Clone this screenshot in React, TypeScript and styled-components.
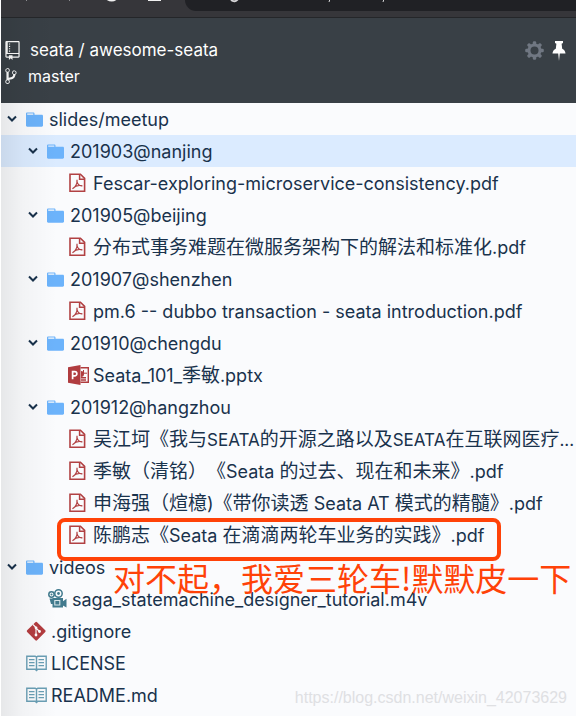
import React from "react";
import styled, { createGlobalStyle, css } from "styled-components";

const GlobalStyle = createGlobalStyle`
  * { box-sizing: border-box; }
  body {
    margin: 0;
    background: #fafbfd;
    font-family: Inter, "Noto Sans CJK SC", sans-serif;
    color: #19324c;
  }
`;

const Page = styled.div`
  position: relative;
  min-height: 100vh;
  overflow: hidden;
  border-left: 1px solid #ffffff;
  background: #fafbfd;
`;

const EdgeShade = styled.div`
  position: absolute;
  inset: 18px auto 0 0;
  width: 56px;
  pointer-events: none;
  background: linear-gradient(to right, rgba(0, 0, 0, 0.08), rgba(0, 0, 0, 0.03) 40%, rgba(0, 0, 0, 0));
`;

const BrowserBar = styled.div`
  display: flex;
  height: 18px;
  overflow: hidden;
  background: #36363a;
  border-bottom: 1px solid #242629;
`;

const ToolIcons = styled.svg`
  flex: none;
  width: 184px;
  height: 17px;
`;

const AddressBar = styled.div`
  flex: 1;
  height: 11px;
  border-bottom-left-radius: 12px;
  background: #202125;
`;

const AddressMarks = styled.svg`
  display: block;
  width: 220px;
  height: 11px;
`;

const Header = styled.header`
  display: flex;
  justify-content: space-between;
  height: 85px;
  padding: 19px 10px 0 4px;
  background: #394046;
  color: #ffffff;
`;

const HeaderLine = styled.div`
  display: flex;
  align-items: center;
  gap: 10px;
  height: 26px;
  font-size: 17px;
  line-height: 26px;
`;

const BranchLine = styled(HeaderLine)`
  font-size: 16px;
`;

const HeaderLink = styled.a`
  color: inherit;
  text-decoration: none;
`;

const Actions = styled.div`
  display: flex;
  align-items: flex-start;
  gap: 8px;
  padding-top: 4px;
`;

const IconButton = styled.button`
  display: flex;
  padding: 0;
  border: 0;
  background: none;
  color: inherit;
`;

const Tree = styled.ul`
  margin: 0;
  padding: 0;
  list-style: none;
`;

const Row = styled.li<{ $level: number; $selected?: boolean }>`
  display: flex;
  align-items: center;
  height: 32px;
  padding-left: ${(p) => 5 + p.$level * 21}px;
  ${(p) => p.$selected && css`background: #dbebff;`}
`;

const Toggle = styled.button`
  display: flex;
  flex: none;
  width: 20px;
  padding: 0;
  border: 0;
  background: none;
  color: #19324c;
`;

const ToggleSpace = styled.span`
  flex: none;
  width: 20px;
`;

const IconSlot = styled.span<{ $wide?: boolean }>`
  display: flex;
  flex: none;
  width: ${(p) => (p.$wide ? 25 : 23)}px;
`;

const Name = styled.a<{ $dense?: boolean }>`
  flex: 1;
  min-width: 0;
  padding-top: 2px;
  overflow: hidden;
  text-overflow: ellipsis;
  white-space: nowrap;
  color: inherit;
  font-size: ${(p) => (p.$dense ? 17 : 18)}px;
  line-height: 32px;
  text-decoration: none;
`;

const Han = styled.span`
  font-family: "Noto Sans CJK SC", sans-serif;
  font-size: 19px;
  line-height: 0;
  text-spacing-trim: space-all;
`;

const HighlightBox = styled.div`
  position: absolute;
  top: 518px;
  left: 56px;
  width: 444px;
  height: 43px;
  border: 4px solid #ff4208;
  border-radius: 8px;
  pointer-events: none;
`;

const Remark = styled.div`
  position: absolute;
  top: 554px;
  left: 112px;
  color: #ff4208;
  font-family: "Noto Sans CJK SC", sans-serif;
  font-size: 32px;
  line-height: 46px;
  white-space: nowrap;
`;

const Watermark = styled.div`
  position: absolute;
  right: 9px;
  bottom: 8px;
  color: #dfe0e3;
  font-family: "Liberation Sans", Arial, sans-serif;
  font-size: 16px;
  line-height: 20px;
`;

type Kind = "folder" | "pdf" | "ppt" | "video" | "git" | "book";

const RepoIcon = () => (
  <svg width="15" height="19" viewBox="0 0 12 16" fill="currentColor" aria-hidden="true">
    <path d="M4 9H3V8h1v1zm0-3H3v1h1V6zm0-2H3v1h1V4zm0-2H3v1h1V2zm8-1v12c0 .55-.45 1-1 1H6v2l-1.5-1.5L3 16v-2H1c-.55 0-1-.45-1-1V1c0-.55.45-1 1-1h10c.55 0 1 .45 1 1zm-1 10H1v2h2v-1h3v1h5v-2zm0-10H2v9h9V1z" />
  </svg>
);

const BranchIcon = () => (
  <svg width="13" height="18" viewBox="0 0 11 16" fill="currentColor" aria-hidden="true">
    <path d="M10 5c0-1.11-.89-2-2-2a1.993 1.993 0 0 0-1 3.72v.3c-.02.52-.23.98-.63 1.38-.4.4-.86.61-1.38.63-.83.02-1.48.16-2 .45V4.72a1.993 1.993 0 0 0-1-3.72C.88 1 0 1.89 0 3a2 2 0 0 0 1 1.72v6.56c-.59.35-1 .99-1 1.72 0 1.11.89 2 2 2 1.11 0 2-.89 2-2 0-.53-.2-1-.53-1.36.09-.06.48-.41.59-.47.25-.11.56-.17.94-.17 1.05-.05 1.95-.45 2.75-1.25S8.95 7.77 9 6.73h-.02C9.59 6.37 10 5.73 10 5zM2 1.8c.66 0 1.2.55 1.2 1.2 0 .65-.55 1.2-1.2 1.2C1.35 4.2.8 3.65.8 3c0-.65.55-1.2 1.2-1.2zm0 12.41c-.66 0-1.2-.55-1.2-1.2 0-.65.55-1.2 1.2-1.2.65 0 1.2.55 1.2 1.2 0 .65-.55 1.2-1.2 1.2zm6-8c-.66 0-1.2-.55-1.2-1.2 0-.65.55-1.2 1.2-1.2.65 0 1.2.55 1.2 1.2 0 .65-.55 1.2-1.2 1.2z" />
  </svg>
);

const GearIcon = () => (
  <svg width="19" height="19" viewBox="0 0 19 19" aria-hidden="true">
    <g fill="#707782">
      {[0, 45, 90, 135].map((a) => (
        <rect key={a} x="7.8" y="0.2" width="3.4" height="18.6" rx="1.2" transform={`rotate(${a} 9.5 9.5)`} />
      ))}
      <circle cx="9.5" cy="9.5" r="7" />
    </g>
    <circle cx="9.5" cy="9.5" r="4" fill="#394046" />
  </svg>
);

const PinIcon = () => (
  <svg width="14" height="20" viewBox="0 0 14 20" fill="currentColor" aria-hidden="true">
    <path d="M3 0h8v2L9.600 2.800l.6 5C12 8.600 13.400 10.400 13.500 12.500H7.800L7 20l-.8-7.500H.5C.6 10.400 2 8.600 3.800 7.800l.6-5L3 2z" />
  </svg>
);

const Chevron = () => (
  <svg width="13" height="10" viewBox="1 0 13 10" fill="none" stroke="currentColor" strokeWidth="2" aria-hidden="true">
    <path d="M3 2.500 7 6.500l4-4" />
  </svg>
);

const icons: Record<Kind, React.ReactNode> = {
  folder: (
    <svg width="17" height="19" viewBox="0 0 14 16" preserveAspectRatio="none" fill="#6cb3fb" aria-hidden="true">
      <path d="M13 4H7V3c0-.66-.31-1-1-1H1c-.55 0-1 .45-1 1v10c0 .55.45 1 1 1h12c.55 0 1-.45 1-1V5c0-.55-.45-1-1-1zM6 4H1V3h5v1z" />
    </svg>
  ),
  pdf: (
    <svg width="19" height="20" viewBox="-1 0 19 20" fill="none" stroke="#b14143" aria-hidden="true">
      <path d="M1 1.200h10.400l4.200 4.200v12.900H1z" strokeWidth="1.600" />
      <path d="M10.600 1.200v5h5" strokeWidth="1.500" />
      <path d="M3.500 15.600c2.600-1 5-5 4.500-8.800-.5 3.600 2.200 6.500 5.300 6.100-3-1-7 .1-9.800 2.700z" strokeWidth="1.200" />
    </svg>
  ),
  ppt: (
    <svg width="22" height="20" viewBox="0 0 22 20" aria-hidden="true">
      <path d="M0 2.200 12.500 0v20L0 17.800z" fill="#b03c3f" />
      <path d="M12.500 2.800h7.800v14.400h-7.800M13 12.800h5M13 15h5" fill="none" stroke="#b03c3f" strokeWidth="1.400" />
      <path d="M13 6a3 3 0 1 1 0 6V9z" fill="#b03c3f" />
      <path d="M15.500 5v3.200H19" fill="none" stroke="#b03c3f" />
      <path d="M4.600 14.200V6.600h2.100a2.100 2.100 0 0 1 0 4.300H4.800" fill="none" stroke="#fff" strokeWidth="1.700" />
    </svg>
  ),
  video: (
    <svg width="21" height="20" viewBox="-1 0 21 20" aria-hidden="true">
      <path d="M4.500 9h10.500v9.500H4.500z" fill="#417a8d" />
      <path d="m14 13 4.500-3.200v8.700L14 16z" fill="#417a8d" />
      <g fill="#fafbfd" stroke="#417a8d" strokeWidth="1.500">
        <circle cx="3.500" cy="5.500" r="2.700" />
        <circle cx="10.500" cy="4.500" r="3.700" />
      </g>
      <g fill="#417a8d">
        <circle cx="3.500" cy="5.500" r="1" />
        <circle cx="10.500" cy="4.500" r="1.400" />
        <path d="M1.500 9.500h3.500v5.500H3z" />
      </g>
      <path d="M6.800 11.500h5v4.500h-5z" fill="none" stroke="#d7e5e9" strokeWidth="1.100" />
    </svg>
  ),
  git: (
    <svg width="21" height="21" viewBox="0 0 21 21" aria-hidden="true">
      <rect x="3.200" y="3.200" width="14" height="14" rx="1.200" fill="#b33c3f" transform="rotate(45 10.2 10.2)" />
      <path d="m7 3.500 3 3V14M10 7l3.500 3.500" fill="none" stroke="#fff" strokeWidth="1.100" />
      <g fill="#fff"><circle cx="10" cy="6.800" r="1.400" /><circle cx="10" cy="14" r="1.400" /><circle cx="13.500" cy="10.500" r="1.400" /></g>
    </svg>
  ),
  book: (
    <svg width="21" height="17" viewBox="0 0 21 17" fill="none" stroke="#6a9fb5" aria-hidden="true">
      <path d="M.8 1.200h8.400l1.300 1 1.300-1h8.400v13h-8.400l-1.300 1.300-1.300-1.300H.8zM10.500 2v13.500" strokeWidth="1.400" />
      <path d="M3 4.700h5.500M3 7.700h5.500M3 10.700h5.500M12.500 4.700H18M12.500 7.700H18M12.500 10.700H18" strokeWidth="1.300" />
    </svg>
  ),
};

type Entry = { level: number; kind: Kind; name: string; selected?: boolean; dense?: boolean };

const entries: Entry[] = [
  { level: 0, kind: "folder", name: "slides/meetup" },
  { level: 1, kind: "folder", name: "201903@nanjing", selected: true },
  { level: 2, kind: "pdf", name: "Fescar-exploring-microservice-consistency.pdf" },
  { level: 1, kind: "folder", name: "201905@beijing" },
  { level: 2, kind: "pdf", name: "分布式事务难题在微服务架构下的解法和标准化.pdf" },
  { level: 1, kind: "folder", name: "201907@shenzhen" },
  { level: 2, kind: "pdf", name: "pm.6 -- dubbo transaction - seata introduction.pdf" },
  { level: 1, kind: "folder", name: "201910@chengdu" },
  { level: 2, kind: "ppt", name: "Seata_101_季敏.pptx" },
  { level: 1, kind: "folder", name: "201912@hangzhou" },
  { level: 2, kind: "pdf", name: "吴江坷《我与SEATA的开源之路以及SEATA在互联网医疗...", dense: true },
  { level: 2, kind: "pdf", name: "季敏（清铭）《Seata 的过去、现在和未来》.pdf" },
  { level: 2, kind: "pdf", name: "申海强（煊檍)《带你读透 Seata AT 模式的精髓》.pdf" },
  { level: 2, kind: "pdf", name: "陈鹏志《Seata 在滴滴两轮车业务的实践》.pdf" },
  { level: 0, kind: "folder", name: "videos" },
  { level: 1, kind: "video", name: "saga_statemachine_designer_tutorial.m4v" },
  { level: 0, kind: "git", name: ".gitignore" },
  { level: 0, kind: "book", name: "LICENSE" },
  { level: 0, kind: "book", name: "README.md" },
];

const renderName = (name: string) =>
  name
    .split(/([\u3000-\u9fff\uff00-\uffef]+)/)
    .filter(Boolean)
    .map((part, i) => (/[\u3000-\u9fff\uff00-\uffef]/.test(part) ? <Han key={i}>{part}</Han> : part));

export default function App() {
  return (
    <>
      <GlobalStyle />
      <Page>
        <BrowserBar>
          <ToolIcons viewBox="0 0 184 17" fill="none" stroke="#f1f1f1" strokeWidth="2" aria-hidden="true">
            <path d="M106 -1q5 3 9 0M147 0h13" />
            <path d="m24 -1 2 2M68 1l2-2" stroke="#8c8c90" strokeWidth="1" />
          </ToolIcons>
          <AddressBar>
            <AddressMarks viewBox="0 0 220 11" fill="none" stroke="#d5d5d7" strokeWidth="2" aria-hidden="true">
              <path d="M46 0q4 3 7-1" />
              <path d="m144 2 1-3M198 2l1-3" strokeWidth="1" />
            </AddressMarks>
          </AddressBar>
        </BrowserBar>
        <Header>
          <div>
            <HeaderLine>
              <RepoIcon />
              <span>
                <HeaderLink href="#seata">seata</HeaderLink> / <HeaderLink href="#repo">awesome-seata</HeaderLink>
              </span>
            </HeaderLine>
            <BranchLine>
              <BranchIcon />
              <span>master</span>
            </BranchLine>
          </div>
          <Actions>
            <IconButton aria-label="Settings"><GearIcon /></IconButton>
            <IconButton aria-label="Pin sidebar"><PinIcon /></IconButton>
          </Actions>
        </Header>
        <Tree>
          {entries.map((e) => (
            <Row key={e.name} $level={e.level} $selected={e.selected}>
              {e.kind === "folder" ? (
                <Toggle aria-label={`Collapse ${e.name}`}><Chevron /></Toggle>
              ) : (
                <ToggleSpace />
              )}
              <IconSlot $wide={e.kind !== "folder"}>{icons[e.kind]}</IconSlot>
              <Name href={`#${e.name}`} $dense={e.dense}>{renderName(e.name)}</Name>
            </Row>
          ))}
        </Tree>
        <EdgeShade />
        <HighlightBox />
        <Remark>对不起，我爱三轮车!默默皮一下</Remark>
        <Watermark>https://blog.csdn.net/weixin_42073629</Watermark>
      </Page>
    </>
  );
}
